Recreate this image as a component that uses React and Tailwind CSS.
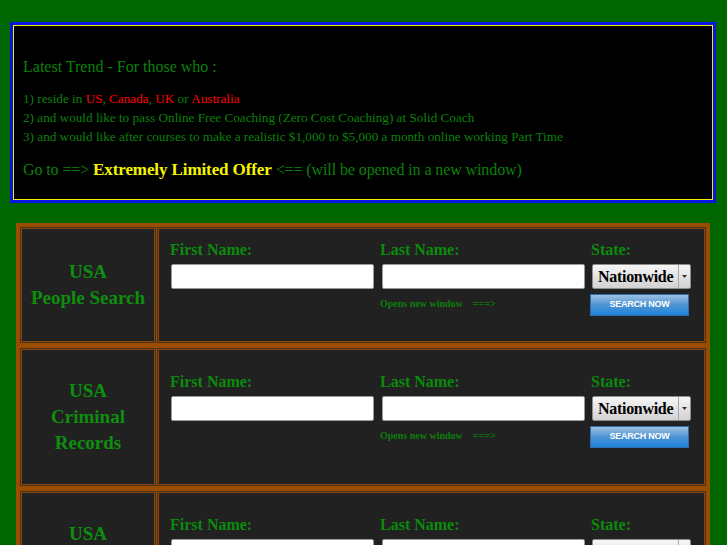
const serif = { fontFamily: '"Liberation Serif", "Times New Roman", serif' }

const rows = [
  { title: ['USA', 'People Search'], h: 'h-[116px]' },
  { title: ['USA', 'Criminal', 'Records'], h: 'h-[138px]' },
  { title: ['USA', 'Background', 'Check'], h: 'h-[138px]' },
]

function SearchRow({ title, h }) {
  return (
    <div className={`flex gap-px ${h}`}>
      <div className="w-[136px] border border-[#4a3218] shadow-[inset_0_0_0_1px_#8a4512] bg-[#212121] flex flex-col items-center justify-center">
        {title.map((t, i) => (
          <div key={i} className="text-[19px] leading-[26px] font-bold text-[#0e8e0e]">{t}</div>
        ))}
      </div>
      <div className="flex-1 border border-[#4a3218] shadow-[inset_0_0_0_1px_#8a4512] bg-[#212121] flex flex-col justify-center pl-[13px] pb-[13px]">
        <div className="flex text-[16px] leading-[18px] font-bold text-[#0b8b0b] -ml-px">
          <div className="w-[210px]">First Name:</div>
          <div className="w-[211px]">Last Name:</div>
          <div>State:</div>
        </div>
        <div className="flex items-start mt-[5px]">
          <div className="w-[203px] h-[25px] bg-white rounded-[2px] border border-[#9a9a9a]" />
          <div className="w-[203px] h-[25px] bg-white rounded-[2px] border border-[#9a9a9a] ml-[8px]" />
          <div className="w-[99px] h-[25px] ml-[7px] rounded-[2px] border border-[#8d8d8d] bg-gradient-to-b from-[#f6f6f6] to-[#d2d2d2] flex">
            <div className="flex-1 text-[16px] leading-[23px] font-bold text-black pl-[5px] tracking-[-0.3px] whitespace-nowrap overflow-hidden">Nationwide</div>
            <div className="w-[12px] border-l border-[#a8a8a8] flex items-center justify-center">
              <svg width="5" height="3" viewBox="0 0 5 3"><path d="M0 0h5L2.5 3z" fill="#333" /></svg>
            </div>
          </div>
        </div>
        <div className="flex items-start mt-[5px]">
          <div className="w-[209px]" />
          <div className="w-[210px] text-[10px] leading-[12px] font-bold text-[#0b7f0b] mt-[4px]">
            Opens new window&nbsp;&nbsp;&nbsp;&nbsp;===&gt;
          </div>
          <div
            className="w-[99px] h-[22px] border border-[#2f6ea8] bg-gradient-to-b from-[#9cc0e2] via-[#4c93d2] to-[#1b84dc] flex items-center justify-center text-white font-bold text-[9px] tracking-tight"
            style={{ fontFamily: '"Liberation Sans", Arial, sans-serif' }}
          >
            SEARCH NOW
          </div>
        </div>
      </div>
    </div>
  )
}

export default function App() {
  return (
    <div className="min-h-screen bg-[#006600] pt-[22px] pl-[10px] overflow-hidden" style={serif}>
      <div className="w-[706px] h-[181px] border-[3px] border-[#0a14e6]">
        <div className="h-full border border-[#f0f000] bg-black pl-[9px] pt-[32px] text-[#0b820b]">
          <div className="text-[16px] leading-[18px]">Latest Trend - For those who :</div>
          <div className="mt-[13px] text-[13.2px] leading-[19px]">
            <div>
              1) reside in <span className="text-[#ff0000]">US</span>, <span className="text-[#ff0000]">Canada</span>,{' '}
              <span className="text-[#ff0000]">UK</span> or <span className="text-[#ff0000]">Australia</span>
            </div>
            <div>2) and would like to pass Online Free Coaching (Zero Cost Coaching) at Solid Coach</div>
            <div>3) and would like after courses to make a realistic $1,000 to $5,000 a month online working Part Time</div>
          </div>
          <div className="mt-[14px] text-[16px] leading-[20px] tracking-[-0.1px]">
            Go to ==&gt; <span className="text-[17px] font-bold text-[#f5f500]">Extremely Limited Offer</span> &lt;== (will be opened in a new window)
          </div>
        </div>
      </div>
      <div className="mt-[20px] ml-[6px] w-[694px] bg-[#9a4c00] p-[4px] flex flex-col gap-[5px]">
        {rows.map((r, i) => (
          <SearchRow key={i} {...r} />
        ))}
      </div>
    </div>
  )
}
